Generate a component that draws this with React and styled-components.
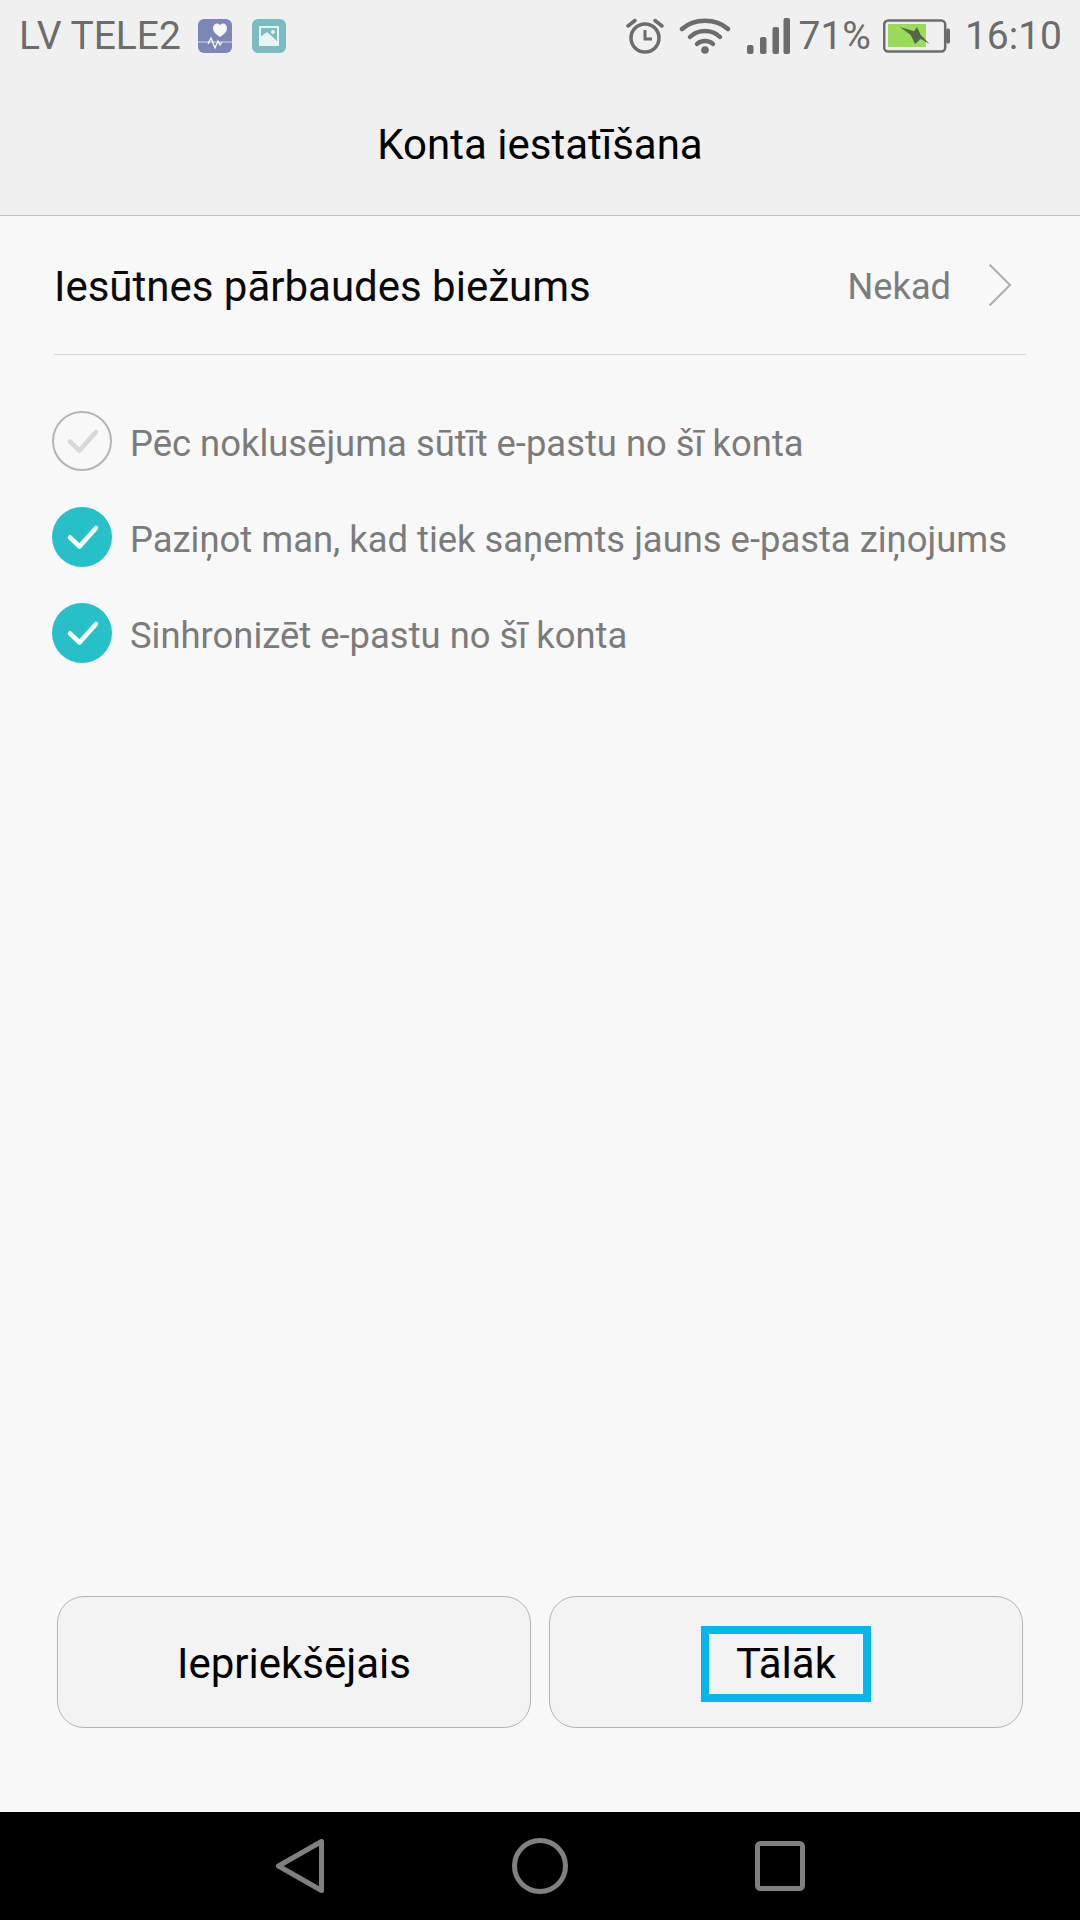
import React from "react";
import styled, { createGlobalStyle } from "styled-components";

const Global = createGlobalStyle`
  html, body { margin: 0; padding: 0; background: #f8f8f8; }
  * { box-sizing: border-box; }
  body { font-family: Roboto, "Noto Sans", sans-serif; }
`;

const Screen = styled.div`
  width: 1080px;
  height: 1920px;
  display: flex;
  flex-direction: column;
  background: #f8f8f8;
  overflow: hidden;
`;
const Header = styled.header`
  height: 216px;
  flex: none;
  background: #f0f0f0;
  border-bottom: 1px solid #c2c2c2;
  display: flex;
  flex-direction: column;
`;
const StatusBar = styled.div`
  height: 72px;
  display: flex;
  align-items: center;
  padding: 0 18px 0 19px;
  color: #6c6c6c;
`;
const Carrier = styled.span`
  font-size: 39px;
  line-height: 72px;
  margin-right: 17px;
`;
const AppBadge = styled.svg`
  width: 34px;
  height: 34px;
  margin-right: 20px;
  flex: none;
`;
const StatusRight = styled.div`
  margin-left: auto;
  display: flex;
  align-items: center;
`;
const StatusIcon = styled.svg`
  flex: none;
  margin-left: ${(p) => p.$ml || 0}px;
`;
const StatusText = styled.span`
  font-size: 39px;
  line-height: 72px;
  margin-left: ${(p) => p.$ml || 0}px;
`;
const TitleBar = styled.div`
  flex: 1;
  display: flex;
  align-items: center;
  justify-content: center;
  padding-top: 2px;
`;
const Title = styled.h1`
  margin: 0;
  font-size: 42px;
  font-weight: 400;
  color: #000;
`;
const Main = styled.main`
  flex: 1;
  display: flex;
  flex-direction: column;
  padding: 0 54px;
`;
const SettingRow = styled.div`
  height: 139px;
  flex: none;
  display: flex;
  align-items: center;
  border-bottom: 1px solid #d6d6d6;
  margin-bottom: 56px;
  padding-top: 3px;
`;
const SettingLabel = styled.span`
  font-size: 42px;
  color: #0a0a0a;
`;
const SettingValue = styled.span`
  margin-left: auto;
  font-size: 36.2px;
  color: #7c7c7c;
`;
const Chevron = styled.svg`
  width: 24px;
  height: 44px;
  margin-left: 37px;
  margin-right: 14px;
  margin-top: -3px;
  flex: none;
`;
const Options = styled.div`
  display: flex;
  flex-direction: column;
  gap: 36px;
  margin-left: -2px;
`;
const Option = styled.div`
  height: 60px;
  display: flex;
  align-items: center;
  gap: 18px;
`;
const Check = styled.svg`
  width: 60px;
  height: 60px;
  flex: none;
`;
const OptionText = styled.span`
  font-size: 36.4px;
  color: #7b7b7b;
  white-space: nowrap;
  padding-top: 4px;
`;
const Footer = styled.div`
  margin-top: auto;
  display: flex;
  gap: 18px;
  padding: 0 57px 0 3px;
  margin-bottom: 84px;
  margin-right: -54px;
`;
const Button = styled.div`
  flex: 1;
  height: 132px;
  border: 1px solid #b4b4b4;
  border-radius: 27px;
  background: #f3f3f3;
  display: flex;
  align-items: center;
  justify-content: center;
  padding-top: 4px;
  font-size: 42px;
  color: #000;
`;
const ButtonLabel = styled.span`
  padding-bottom: 2px;
`;
const Focus = styled.span`
  display: flex;
  align-items: center;
  justify-content: center;
  width: 170px;
  height: 76px;
  border: 8px solid #05b6ec;
  padding-bottom: 2px;
`;
const NavBar = styled.nav`
  height: 108px;
  flex: none;
  background: #000;
  display: flex;
  align-items: center;
  padding-left: 276px;
`;
const NavIcon = styled.svg`
  flex: none;
  margin-left: ${(p) => p.$ml || 0}px;
`;

const CheckMark = ({ on }) => (
  <Check viewBox="0 0 60 60">
    {on ? (
      <>
        <circle cx="30" cy="30" r="30" fill="#27c0c9" />
        <path d="M18 30.500L27.500 39.500L44 21" fill="none" stroke="#fff" strokeWidth="4.500" strokeLinecap="round" strokeLinejoin="round" />
      </>
    ) : (
      <>
        <circle cx="30" cy="30" r="29" fill="none" stroke="#b4b4b4" strokeWidth="2" />
        <path d="M18 30.500L27.500 39.500L44 21" fill="none" stroke="#d8d8d8" strokeWidth="4.500" strokeLinecap="round" strokeLinejoin="round" />
      </>
    )}
  </Check>
);

export default function App() {
  return (
    <Screen>
      <Global />
      <Header>
        <StatusBar>
          <Carrier>LV TELE2</Carrier>
          <AppBadge viewBox="0 0 34 34">
            <rect width="34" height="34" rx="6" fill="#7b87b6" />
            <path d="M0 23h34" stroke="#a9b1d1" strokeWidth="2" />
            <path d="M10 25l3-6 4 10 3-7 2 4 2-3" fill="none" stroke="#fff" strokeWidth="1.200" />
            <path d="M22 18c-4-3-7-5-7-9 0-3 2-4.500 4-4.500 1.300 0 2.300.6 3 1.800.7-1.200 1.700-1.800 3-1.800 2 0 4 1.500 4 4.500 0 4-3 6-7 9z" fill="#f6f7fb" />
          </AppBadge>
          <AppBadge viewBox="0 0 34 34">
            <rect width="34" height="34" rx="6" fill="#7bbcc0" />
            <rect x="8" y="8" width="18" height="18" fill="none" stroke="#e8f3f4" strokeWidth="2" />
            <path d="M8 18l7-5 11 10v3H8z" fill="#e8f3f4" />
            <circle cx="21" cy="13" r="2" fill="#e8f3f4" />
          </AppBadge>
          <StatusRight>
            <StatusIcon width="38" height="38" viewBox="0 0 38 38" fill="none" stroke="#6c6c6c">
              <circle cx="19" cy="21" r="14" strokeWidth="3.500" />
              <path d="M19 13v9h7" strokeWidth="3" />
              <path d="M2 9L9 3.500M36 9L29 3.500" strokeWidth="3.500" strokeLinecap="round" />
            </StatusIcon>
            <StatusIcon $ml={15} width="52" height="38" viewBox="0 0 52 38" fill="none" stroke="#6c6c6c" strokeWidth="4.500" strokeLinecap="round">
              <path d="M3 12C15 1 37 1 49 12" />
              <path d="M11 20C19 12 33 12 41 20" />
              <path d="M18 27C22 23 30 23 34 27" />
              <circle cx="26" cy="33" r="3.800" fill="#6c6c6c" stroke="none" />
            </StatusIcon>
            <StatusIcon $ml={15} width="44" height="38" viewBox="0 0 44 38" fill="#6c6c6c">
              <rect x="1" y="28" width="6.500" height="9" rx="2" />
              <rect x="14" y="20" width="6.500" height="17" rx="2" />
              <rect x="26.500" y="10" width="6.500" height="27" rx="2" />
              <rect x="37.500" y="1" width="6.500" height="36" rx="2" />
            </StatusIcon>
            <StatusText $ml={8}>71%</StatusText>
            <StatusIcon $ml={12} width="68" height="34" viewBox="0 0 68 34">
              <rect x="1.200" y="1.500" width="61" height="31" rx="4" fill="none" stroke="#6c6c6c" strokeWidth="2.500" />
              <rect x="5" y="5" width="38" height="23" fill="#9bdb5c" />
              <rect x="63" y="9.500" width="4" height="15" rx="1.500" fill="#6c6c6c" />
              <path d="M17 8l14 4.300 3-4.300 3.700 8 9 9-9-5-5.700 5-4.300-9z" fill="#55664a" />
            </StatusIcon>
            <StatusText $ml={14}>16:10</StatusText>
          </StatusRight>
        </StatusBar>
        <TitleBar>
          <Title>Konta iestatīšana</Title>
        </TitleBar>
      </Header>
      <Main>
        <SettingRow>
          <SettingLabel>Iesūtnes pārbaudes biežums</SettingLabel>
          <SettingValue>Nekad</SettingValue>
          <Chevron viewBox="0 0 24 44">
            <path d="M1.500 1.500L22 22L1.500 42.500" fill="none" stroke="#aeaeae" strokeWidth="2" />
          </Chevron>
        </SettingRow>
        <Options>
          <Option>
            <CheckMark />
            <OptionText>Pēc noklusējuma sūtīt e-pastu no šī konta</OptionText>
          </Option>
          <Option>
            <CheckMark on />
            <OptionText>Paziņot man, kad tiek saņemts jauns e-pasta ziņojums</OptionText>
          </Option>
          <Option>
            <CheckMark on />
            <OptionText>Sinhronizēt e-pastu no šī konta</OptionText>
          </Option>
        </Options>
        <Footer>
          <Button>
            <ButtonLabel>Iepriekšējais</ButtonLabel>
          </Button>
          <Button>
            <Focus>Tālāk</Focus>
          </Button>
        </Footer>
      </Main>
      <NavBar>
        <NavIcon width="48" height="54" viewBox="0 0 48 54" fill="none" stroke="#808080" strokeWidth="5" strokeLinejoin="round">
          <path d="M2.500 27L45.500 2.500V51.500z" />
        </NavIcon>
        <NavIcon $ml={188} width="56" height="56" viewBox="0 0 56 56" fill="none" stroke="#808080" strokeWidth="5">
          <circle cx="28" cy="28" r="25.500" />
        </NavIcon>
        <NavIcon $ml={187} width="50" height="50" viewBox="0 0 50 50" fill="none" stroke="#808080" strokeWidth="5">
          <rect x="2.500" y="2.500" width="45" height="45" rx="3" />
        </NavIcon>
      </NavBar>
    </Screen>
  );
}
